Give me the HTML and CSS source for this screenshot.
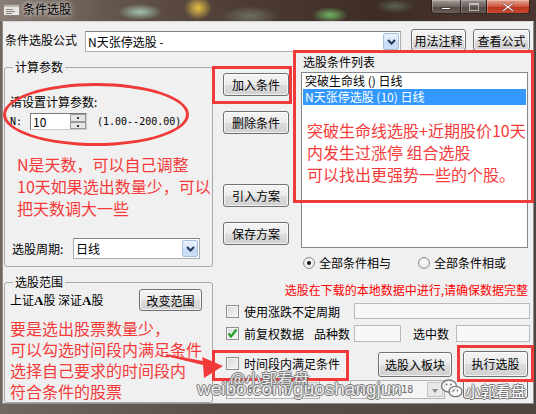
FILE: index.html
```html
<!DOCTYPE html>
<html lang="zh-CN">
<head>
    <meta charset="UTF-8">
    <title>条件选股</title>
    <link rel="stylesheet" href="styles.css">
</head>
<body>
    <div class="window">
        <div class="titlebar">
            <span class="app-icon">
                <svg width="17" height="12" viewBox="0 0 17 12">
                    <rect x="0.5" y="0.5" width="16" height="11" fill="#e9e6e2" stroke="#8a8580"/>
                    <rect x="1" y="1" width="15" height="2" fill="#b9b4ae"/>
                    <line x1="3" y1="5.5" x2="10" y2="5.5" stroke="#8a8580"/>
                    <line x1="3" y1="7.5" x2="12" y2="7.5" stroke="#8a8580"/>
                    <line x1="3" y1="9.5" x2="9" y2="9.5" stroke="#8a8580"/>
                </svg>
            </span>
            <span class="title">条件选股</span>
            <div class="caption-btns">
                <span class="cap cap-min"><i></i></span>
                <span class="cap cap-max"><i></i></span>
                <span class="cap cap-close">
                    <svg width="12" height="10" viewBox="0 0 12 10">
                        <path d="M1 0 L6 4 L11 0 L12 1 L7.5 5 L12 9 L11 10 L6 6 L1 10 L0 9 L4.5 5 L0 1 Z" fill="#fff" stroke="#5a2a20" stroke-width="0.6"/>
                    </svg>
                </span>
            </div>
        </div>

        <div class="client">
            <div class="formula-row">
                <span class="formula-label">条件选股公式</span>
                <div class="combo formula-combo">
                    <span class="combo-text">N天张停选股 -</span>
                    <span class="drop"><svg width="9" height="6" viewBox="0 0 9 6"><path d="M1 1 L4.5 4.5 L8 1" fill="none" stroke="#1e395b" stroke-width="2"/></svg></span>
                </div>
                <button class="btn btn-usage">用法注释</button>
                <button class="btn btn-view">查看公式</button>
            </div>

            <div class="main">
                <div class="left-col">
                    <fieldset class="group group-params">
                        <legend>计算参数</legend>
                        <div class="param-title">请设置计算参数:</div>
                        <div class="param-row">
                            <span class="mono param-name">N:</span>
                            <div class="spin">
                                <span class="spin-val">10</span>
                                <span class="spin-btns"><i class="up"></i><i class="down"></i></span>
                            </div>
                            <span class="mono range">(1.00--200.00)</span>
                        </div>
                        <div class="note-red note-params">N是天数，可以自己调整<br>10天如果选出数量少，可以<br>把天数调大一些</div>
                        <div class="period-row">
                            <span class="period-label">选股周期:</span>
                            <div class="combo period-combo">
                                <span class="combo-text">日线</span>
                                <span class="drop"><svg width="9" height="6" viewBox="0 0 9 6"><path d="M1 1 L4.5 4.5 L8 1" fill="none" stroke="#1e395b" stroke-width="2"/></svg></span>
                            </div>
                        </div>
                    </fieldset>

                    <fieldset class="group group-range">
                        <legend>选股范围</legend>
                        <div class="range-row">
                            <span class="range-text">上证<b>A</b>股 深证<b>A</b>股</span>
                            <button class="btn btn-range">改变范围</button>
                        </div>
                        <div class="note-red note-range">要是选出股票数量少，<br>可以勾选时间段内满足条件<br>选择自己要求的时间段内<br>符合条件的股票</div>
                    </fieldset>
                </div>

                <div class="right-col">
                    <div class="right-top">
                        <div class="mid-btns">
                            <button class="btn mid-btn btn-add">加入条件</button>
                            <button class="btn mid-btn btn-del">删除条件</button>
                            <button class="btn mid-btn btn-load">引入方案</button>
                            <button class="btn mid-btn btn-save">保存方案</button>
                        </div>
                        <div class="list-col">
                            <div class="list-label">选股条件列表</div>
                            <div class="listbox">
                                <div class="list-item">突破生命线 () 日线</div>
                                <div class="list-item selected">N天张停选股 (10) 日线</div>
                                <div class="note-red note-list">突破生命线选股+近期股价10天<br>内发生过涨停 组合选股<br>可以找出更强势一些的个股。</div>
                            </div>
                        </div>
                    </div>

                    <div class="radio-row">
                        <label class="radio-opt"><span class="radio checked"></span>全部条件相与</label>
                        <label class="radio-opt"><span class="radio"></span>全部条件相或</label>
                    </div>

                    <div class="warn">选股在下载的本地数据中进行,请确保数据完整</div>

                    <div class="opt-row row-a">
                        <label class="check-opt w-a"><span class="checkbox"></span>使用涨跌不定周期</label>
                        <span class="field field-period"></span>
                    </div>

                    <div class="opt-row row-b">
                        <label class="check-opt w-b"><span class="checkbox checked"><svg width="11" height="11" viewBox="0 0 11 11"><path d="M1.5 5.5 L4 8.5 L9.5 1.5" fill="none" stroke="#21a121" stroke-width="2.2"/></svg></span>前复权数据</label>
                        <span class="field-label w-kinds">品种数</span>
                        <span class="field field-kinds"></span>
                        <span class="field-label w-picked">选中数</span>
                        <span class="field field-picked"></span>
                    </div>

                    <div class="opt-row row-c">
                        <label class="check-opt w-c"><span class="checkbox"></span>时间段内满足条件</label>
                        <button class="btn btn-block">选股入板块</button>
                        <button class="btn btn-run">执行选股</button>
                    </div>

                    <div class="opt-row row-d">
                        <div class="datepick date-from">
                            <span class="date-text">2016/ 2/18</span>
                            <span class="date-drop"></span>
                        </div>
                        <span class="date-sep">-</span>
                        <div class="datepick date-to">
                            <span class="date-text">2016/ 2/18</span>
                            <span class="date-drop"></span>
                        </div>
                        <button class="btn btn-close"><span class="wm-small">小郭看盘</span></button>
                    </div>
                </div>
            </div>
        </div>

        <!-- annotations drawn over the dialog -->
        <div class="mark mark-add"></div>
        <div class="mark mark-list"></div>
        <div class="mark mark-time"></div>
        <div class="mark mark-run"></div>
        <div class="mark-ellipse"></div>
        <svg class="mark-arrow" width="70" height="40" viewBox="0 0 70 40">
            <polygon points="6,9 43,16 42,12 63,21 44,33 43,20 6,11" fill="#f23a3a"/>
        </svg>

        <div class="wm wm-at">@小郭看盘</div>
        <div class="wm wm-url">weibo.com/guoshangjun</div>
        <svg class="wm-wechat" width="24" height="22" viewBox="0 0 24 22">
            <ellipse cx="9" cy="8" rx="7.5" ry="6" fill="rgba(255,255,255,0.6)" stroke="#777" stroke-width="1.3"/>
            <ellipse cx="15.5" cy="13.5" rx="6.5" ry="5.2" fill="rgba(255,255,255,0.7)" stroke="#777" stroke-width="1.3"/>
            <circle cx="6.5" cy="6.5" r="1" fill="#777"/>
            <circle cx="11" cy="6.5" r="1" fill="#777"/>
            <circle cx="13.5" cy="12.5" r="0.9" fill="#777"/>
            <circle cx="17.5" cy="12.5" r="0.9" fill="#777"/>
        </svg>
    </div>
</body>
</html>
```

FILE: styles.css
```css
* {
    box-sizing: border-box;
}

body {
    margin: 0;
    background: #3b302b;
    font-family: "Noto Sans CJK SC", "Noto Sans", sans-serif;
    font-size: 12px;
    color: #000;
}

.window {
    position: relative;
    width: 536px;
    height: 414px;
    overflow: hidden;
    display: flex;
    flex-direction: column;
    background: linear-gradient(90deg, #6f6760, #5a504a 40%, #4d4540 100%);
}

/* title bar (aero glass over a blurred wallpaper) */
.titlebar {
    height: 21px;
    display: flex;
    align-items: flex-start;
    background:
        radial-gradient(ellipse 22px 8px at 140px 12px, rgba(175, 215, 195, 0.85), transparent),
        radial-gradient(ellipse 14px 12px at 198px 8px, rgba(238, 200, 70, 0.95), transparent),
        radial-gradient(ellipse 30px 10px at 250px 16px, rgba(150, 175, 150, 0.45), transparent),
        radial-gradient(ellipse 18px 8px at 330px 15px, rgba(120, 205, 110, 0.85), transparent),
        radial-gradient(ellipse 20px 7px at 395px 6px, rgba(120, 150, 130, 0.5), transparent),
        linear-gradient(90deg, #8a7f78 0%, #66574e 20%, #4c3c33 45%, #3d2d25 70%, #4a3530 100%);
}

.app-icon {
    margin: 2px 0 0 3px;
    height: 12px;
}

.title {
    margin: 1px 0 0 3px;
    line-height: 16px;
    font-size: 12px;
    color: #000;
    text-shadow: 0 0 5px rgba(255, 255, 255, 0.9), 0 0 8px rgba(255, 255, 255, 0.6);
}

.caption-btns {
    display: flex;
    margin-left: auto;
    margin-right: 6px;
}

.cap {
    height: 14px;
    display: flex;
    align-items: center;
    justify-content: center;
    border: 1px solid rgba(30, 20, 18, 0.85);
    border-top: none;
    border-left: none;
    box-shadow: inset 1px 1px 0 rgba(255, 255, 255, 0.25);
}

.cap-min {
    width: 30px;
    border-left: 1px solid rgba(30, 20, 18, 0.85);
    border-bottom-left-radius: 4px;
    background: linear-gradient(#a59d99, #6f6460 50%, #574a46 51%, #6a5d58);
}

.cap-min i {
    width: 10px;
    height: 3px;
    margin-top: 4px;
    background: #fff;
    border: 1px solid #4a4040;
}

.cap-max {
    width: 26px;
    background: linear-gradient(#958e8a, #6b625e 50%, #564b47 51%, #665955);
}

.cap-max i {
    width: 10px;
    height: 8px;
    border: 1px solid rgba(255, 255, 255, 0.55);
    border-top-width: 2px;
}

.cap-close {
    width: 43px;
    border-bottom-right-radius: 4px;
    background: linear-gradient(#e7a896, #d0553d 50%, #b9331d 51%, #c9482e);
}

/* dialog client area */
.client {
    height: 383px;
    margin-left: 2px;
    width: 532px;
    background: #f0f0f0;
    border: 1px solid #8d8d8d;
    border-top-color: #d6d6d6;
    display: flex;
    flex-direction: column;
    overflow: hidden;
}

.formula-row {
    display: flex;
    align-items: flex-start;
    height: 31px;
    padding: 7px 0 0 2px;
}

.formula-label {
    width: 80px;
    line-height: 22px;
}

.combo {
    position: relative;
    display: flex;
    align-items: center;
    height: 21px;
    background: #fff;
    border: 1px solid #abadb3;
    border-top-color: #7f8187;
}

.combo-text {
    flex: 1;
    padding-left: 2px;
    line-height: 18px;
}

.drop {
    width: 16px;
    height: 17px;
    margin-right: 1px;
    display: flex;
    align-items: center;
    justify-content: center;
    border: 1px solid #a7bedd;
    border-radius: 2px;
    background: linear-gradient(#eaf2fc, #d6e5f7 50%, #c3d8f2 51%, #cfe0f5);
}

.formula-combo {
    width: 316px;
    margin-top: 2px;
}

.btn {
    height: 22px;
    padding: 0;
    font-family: inherit;
    font-size: 12px;
    color: #000;
    border: 1px solid #707070;
    border-radius: 3px;
    background: linear-gradient(#f4f4f4, #ebebeb 50%, #dddddd 51%, #d0d0d0);
    box-shadow: inset 0 0 0 1px rgba(255, 255, 255, 0.7);
}

.btn-usage {
    width: 55px;
    margin-left: 10px;
}

.btn-view {
    width: 57px;
    margin-left: 7px;
}

.main {
    flex: 1;
    display: flex;
}

.left-col {
    width: 210px;
}

.group {
    min-width: 0;
    width: 209px;
    margin: 0 0 0 1px;
    padding: 0 5px;
    border: 1px solid #a9a9a9;
    border-radius: 3px;
}

.group legend {
    margin-left: 3px;
    padding: 0 2px;
    line-height: 14px;
}

.group-params {
    height: 207px;
    margin-top: 8px;
}

.param-title {
    margin-top: 21px;
    line-height: 14px;
}

.param-row {
    display: flex;
    align-items: center;
    margin-top: 4px;
    height: 17px;
}

.mono {
    font-family: "DejaVu Sans Mono", "Liberation Mono", monospace;
    font-size: 10px;
}

.param-name {
    width: 20px;
}

.spin {
    display: flex;
    width: 57px;
    height: 17px;
    background: #fff;
    border: 1px solid #7a7a7a;
    border-right-color: #c9c9c9;
    border-bottom-color: #c9c9c9;
}

.spin-val {
    flex: 1;
    padding-left: 2px;
    line-height: 15px;
}

.spin-btns {
    width: 16px;
    display: flex;
    flex-direction: column;
}

.spin-btns i {
    flex: 1;
    border: 1px solid #9a9a9a;
    background: #e6e6e6;
    position: relative;
}

.spin-btns i::after {
    content: "";
    position: absolute;
    left: 6px;
    top: 2px;
    width: 2px;
    height: 2px;
    background: #333;
}

.range {
    margin-left: 10px;
}

.note-red {
    color: #f53a3a;
    font-size: 16px;
    white-space: nowrap;
}

.note-params {
    margin: 23px 0 0 7px;
    line-height: 22px;
}

.period-row {
    display: flex;
    align-items: center;
    margin-top: 19px;
}

.period-label {
    width: 63px;
    padding-left: 2px;
}

.period-combo {
    width: 127px;
}

.group-range {
    height: 128px;
    margin-top: 8px;
}

.range-row {
    display: flex;
    align-items: center;
    height: 22px;
}

.range-text {
    width: 129px;
}

.range-text b {
    font-family: "Liberation Serif", serif;
    font-size: 13px;
}

.btn-range {
    width: 63px;
}

.note-range {
    margin-top: 7px;
    line-height: 21px;
}

.right-col {
    width: 320px;
    display: flex;
    flex-direction: column;
}

.right-top {
    display: flex;
    height: 197px;
}

.mid-btns {
    width: 80px;
    padding-left: 10px;
    display: flex;
    flex-direction: column;
}

.mid-btn {
    width: 66px;
    height: 23px;
}

.btn-add {
    margin-top: 21px;
}

.btn-del {
    margin-top: 15px;
}

.btn-load {
    margin-top: 50px;
}

.btn-save {
    margin-top: 15px;
}

.list-col {
    width: 240px;
}

.list-label {
    margin: 3px 0 0 10px;
    line-height: 14px;
}

.listbox {
    margin: 3px 0 0 8px;
    width: 227px;
    height: 176px;
    background: #fff;
    border: 1px solid #828790;
    padding: 0 1px;
}

.list-item {
    height: 16px;
    line-height: 16px;
    padding-left: 2px;
}

.list-item.selected {
    background: #3399ff;
    color: #fff;
}

.note-list {
    margin-top: 14px;
    padding-left: 4px;
    line-height: 22px;
}

.radio-row {
    display: flex;
    margin-top: 7px;
    height: 14px;
    padding-left: 90px;
}

.radio-opt {
    display: flex;
    align-items: center;
    width: 135px;
    line-height: 14px;
}

.radio {
    width: 12px;
    height: 12px;
    margin-right: 4px;
    border: 1px solid #8e8f8f;
    border-radius: 50%;
    background: radial-gradient(circle at 50% 40%, #ffffff, #dcdcdc);
    display: flex;
    align-items: center;
    justify-content: center;
}

.radio.checked::after {
    content: "";
    width: 4px;
    height: 4px;
    border-radius: 50%;
    background: #111;
}

.warn {
    margin-top: 12px;
    line-height: 15px;
    text-align: right;
    padding-right: 5px;
    color: #ff0000;
}

.opt-row {
    display: flex;
    align-items: center;
    padding-left: 13px;
}

.check-opt {
    display: flex;
    align-items: center;
}

.checkbox {
    width: 13px;
    height: 13px;
    margin-right: 5px;
    border: 1px solid #8e8f8f;
    background: linear-gradient(135deg, #d8d8d8, #f7f7f7);
    box-shadow: inset 0 0 0 1px #f4f4f4;
    display: flex;
    align-items: center;
    justify-content: center;
}

.row-a {
    margin-top: 6px;
    height: 16px;
}

.w-a {
    width: 128px;
}

.field {
    height: 16px;
    background: #f7f7f7;
    border: 1px solid #b9b9b9;
}

.field-period {
    width: 176px;
}

.row-b {
    margin-top: 6px;
    height: 17px;
}

.w-b {
    width: 88px;
}

.field-label {
    line-height: 17px;
}

.w-kinds {
    width: 40px;
}

.field-kinds {
    width: 47px;
    height: 17px;
}

.w-picked {
    width: 43px;
    margin-left: 12px;
}

.field-picked {
    width: 74px;
    height: 17px;
}

.row-c {
    margin-top: 8px;
    height: 27px;
}

.w-c {
    width: 152px;
}

.btn-block {
    width: 74px;
    height: 25px;
    margin-top: 2px;
}

.btn-run {
    width: 65px;
    height: 26px;
    margin-left: 11px;
}

.row-d {
    margin-top: 3px;
    height: 19px;
}

.datepick {
    display: flex;
    height: 19px;
    background: #f4f4f4;
    border: 1px solid #b3b3b3;
}

.date-text {
    flex: 1;
    padding-left: 2px;
    line-height: 17px;
    color: #6d6d6d;
    font-family: "DejaVu Sans Mono", "Liberation Mono", monospace;
    font-size: 10px;
}

.date-drop {
    width: 16px;
    margin: 1px;
    border: 1px solid #c4c4c4;
    background: #e8e8e8;
    position: relative;
}

.date-drop::after {
    content: "";
    position: absolute;
    left: 4px;
    top: 6px;
    border: 3px solid transparent;
    border-top: 4px solid #8a8a8a;
}

.date-from {
    width: 94px;
}

.date-sep {
    width: 30px;
    text-align: center;
    color: #555;
}

.date-to {
    width: 95px;
}

.btn-close {
    width: 65px;
    height: 20px;
    margin-left: 18px;
    margin-top: -1px;
}

.wm-small {
    font-size: 15px;
    color: #fff;
    text-shadow: 1px 0 #777, -1px 0 #777, 0 1px #777, 0 -1px #777;
}

/* red annotations painted on top of the screenshot */
.mark {
    position: absolute;
    border: 3px solid #f03a3a;
}

.mark-add {
    left: 212px;
    top: 66px;
    width: 80px;
    height: 38px;
}

.mark-list {
    left: 293px;
    top: 50px;
    width: 241px;
    height: 153px;
}

.mark-time {
    left: 212px;
    top: 350px;
    width: 137px;
    height: 31px;
}

.mark-run {
    left: 457px;
    top: 345px;
    width: 77px;
    height: 37px;
}

.mark-ellipse {
    position: absolute;
    left: 3px;
    top: 83px;
    width: 186px;
    height: 63px;
    border: 3px solid #f03a3a;
    border-radius: 50%;
}

.mark-arrow {
    position: absolute;
    left: 160px;
    top: 345px;
}

/* weibo watermark */
.wm {
    position: absolute;
    color: rgba(255, 255, 255, 0.85);
    text-shadow: 1px 0 #7a7a7a, -1px 0 #7a7a7a, 0 1px #7a7a7a, 0 -1px #7a7a7a;
    white-space: nowrap;
}

.wm-at {
    left: 230px;
    top: 368px;
    font-size: 16px;
    line-height: 20px;
}

.wm-url {
    left: 197px;
    top: 378px;
    font-family: "Liberation Sans", sans-serif;
    font-size: 19px;
    line-height: 22px;
}

.wm-wechat {
    position: absolute;
    left: 440px;
    top: 378px;
}
```
